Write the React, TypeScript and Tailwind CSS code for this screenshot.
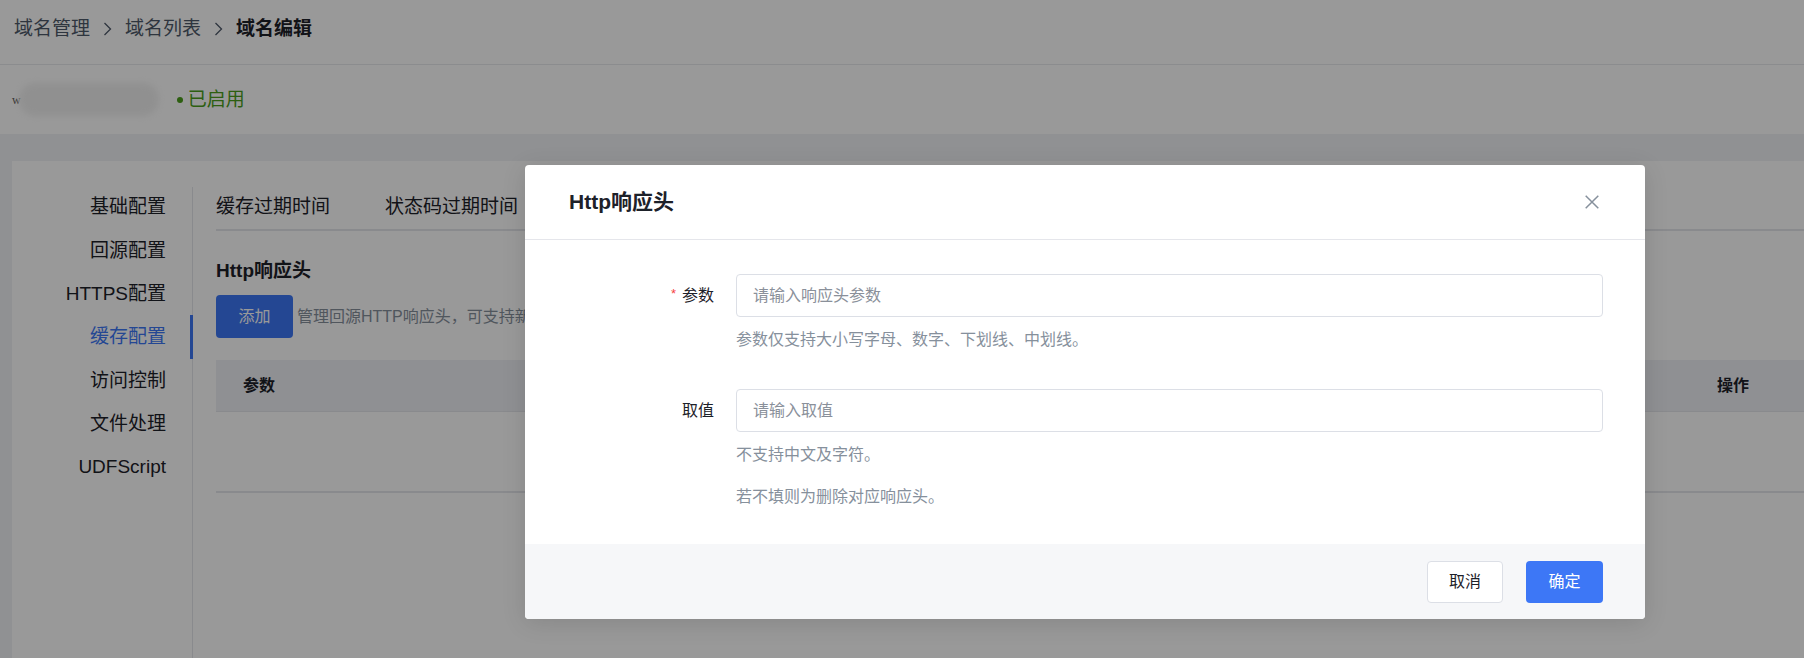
import React from "react";

function Chevron() {
  return (
    <svg width="9" height="14" viewBox="0 0 9 14" className="mx-[13px]">
      <path d="M1.5 1 L7.5 7 L1.5 13" fill="none" stroke="#4e5969" strokeWidth="1.3" />
    </svg>
  );
}

const navItems = ["基础配置", "回源配置", "HTTPS配置", "缓存配置", "访问控制", "文件处理", "UDFScript"];

export default function App() {
  return (
    <div className="relative w-[1804px] h-[658px] overflow-hidden bg-[#f0f2f5] font-[family-name:'Liberation_Sans','Noto_Sans_CJK_SC',sans-serif]">
      {/* top area */}
      <div className="bg-white">
        <div className="h-[65px] border-b border-[#e8e9ed] pl-[14px] pt-[17px]">
          <div className="flex items-center h-[24px] text-[19px] leading-[24px]">
            <span className="text-[#4e5969]">域名管理</span>
            <Chevron />
            <span className="text-[#4e5969]">域名列表</span>
            <Chevron />
            <span className="text-[#1d2129] font-bold">域名编辑</span>
          </div>
        </div>
        <div className="h-[69px] flex items-center pl-[12px]">
          <span className="text-[12px] text-[#555] font-[family-name:'Liberation_Serif',serif]">w</span>
          <div className="w-[140px] h-[33px] rounded-full bg-[#f1f1f1] blur-[3px] -ml-[2px]" />
          <span className="ml-[18px] w-[6px] h-[6px] rounded-full bg-[#4b9e1c]" />
          <span className="ml-[5px] text-[19px] leading-[24px] text-[#4b9e1c]">已启用</span>
        </div>
      </div>

      {/* card */}
      <div className="pt-[27px] pl-[12px]">
        <div className="bg-white h-[600px] flex">
          {/* sidebar */}
          <div className="w-[180px] pt-[25px] flex flex-col">
            {navItems.map((t) => (
              <div
                key={t}
                className={
                  "relative h-[43.3px] flex items-center justify-end pr-[26px] text-[19px] " +
                  (t === "缓存配置" ? "text-[#3d77f6]" : "text-[#1d2129]")
                }
              >
                {t}
                {t === "缓存配置" && (
                  <span className="absolute right-[-1px] top-[-1px] w-[3px] h-[44px] bg-[#3d77f6]" />
                )}
              </div>
            ))}
          </div>
          <div className="w-[1px] mt-[26px] bg-[#e5e6eb]" />
          {/* content */}
          <div className="flex-1 pl-[23px] pt-[26px]">
            <div className="h-[44px] border-b-2 border-[#e5e6eb] pt-[8px] flex items-start text-[19px] leading-[24px] text-[#1d2129]">
              <span>缓存过期时间</span>
              <span className="ml-[55px]">状态码过期时间</span>
            </div>
            <div className="mt-[27px] text-[19px] leading-[26px] font-bold text-[#1d2129]">Http响应头</div>
            <div className="mt-[11px] flex items-center">
              <div className="w-[77px] h-[43px] rounded-[4px] bg-[#3d77f6] text-white text-[16px] flex items-center justify-center">
                添加
              </div>
              <span className="ml-[4px] text-[16px] text-[#86909c]">
                管理回源HTTP响应头，可支持新增、修改、删除HTTP响应头。
              </span>
            </div>
            <div className="mt-[22px]">
              <div className="h-[52px] bg-[#eef0f5] border-b border-[#e5e6eb] flex items-center pl-[27px] pr-[55px] text-[16px] font-bold text-[#1d2129]">
                <span>参数</span>
                <span className="ml-auto">操作</span>
              </div>
              <div className="h-[81px] border-b-2 border-[#e5e6eb]" />
            </div>
          </div>
        </div>
      </div>

      {/* overlay */}
      <div className="absolute inset-0 bg-black/40" />

      {/* modal */}
      <div className="absolute left-[525px] top-[165px] w-[1120px] rounded-[4px] bg-white shadow-[0_4px_24px_rgba(0,0,0,0.12)] overflow-hidden">
        <div className="h-[75px] border-b border-[#e5e6eb] pl-[44px] pr-[46px] flex items-center justify-between">
          <span className="text-[21px] font-bold text-[#1d2129]">Http响应头</span>
          <svg width="14" height="14" viewBox="0 0 14 14">
            <path d="M0.7 0.7 L13.3 13.3 M13.3 0.7 L0.7 13.3" stroke="#86909c" strokeWidth="1.5" fill="none" />
          </svg>
        </div>
        <div className="pt-[34px] pb-[35px] pr-[42px]">
          <div className="flex items-center h-[43px]">
            <div className="w-[189px] flex items-center justify-end text-[16px] text-[#1d2129]">
              <span className="text-[#f53f3f] text-[13px] mr-[6px] -mt-[4px]">*</span>
              参数
            </div>
            <div className="ml-[22px] flex-1 h-[43px] rounded-[4px] border border-[#dcdfe6] flex items-center pl-[16px] text-[16px] text-[#8a909a]">
              请输入响应头参数
            </div>
          </div>
          <div className="ml-[211px] mt-[11px] h-[24px] leading-[24px] text-[16px] text-[#86909c]">
            参数仅支持大小写字母、数字、下划线、中划线。
          </div>
          <div className="flex items-center h-[43px] mt-[37px]">
            <div className="w-[189px] text-right text-[16px] text-[#1d2129]">取值</div>
            <div className="ml-[22px] flex-1 h-[43px] rounded-[4px] border border-[#dcdfe6] flex items-center pl-[16px] text-[16px] text-[#8a909a]">
              请输入取值
            </div>
          </div>
          <div className="ml-[211px] mt-[11px] h-[24px] leading-[24px] text-[16px] text-[#86909c]">
            不支持中文及字符。
          </div>
          <div className="ml-[211px] mt-[18px] h-[24px] leading-[24px] text-[16px] text-[#86909c]">
            若不填则为删除对应响应头。
          </div>
        </div>
        <div className="h-[75px] bg-[#f6f7f9] flex items-center justify-end pr-[42px] gap-[23px]">
          <div className="w-[76px] h-[42px] rounded-[4px] border border-[#dcdfe6] bg-white flex items-center justify-center text-[16px] text-[#1d2129]">
            取消
          </div>
          <div className="w-[77px] h-[42px] rounded-[4px] bg-[#3d77f6] flex items-center justify-center text-[16px] text-white">
            确定
          </div>
        </div>
      </div>
    </div>
  );
}
